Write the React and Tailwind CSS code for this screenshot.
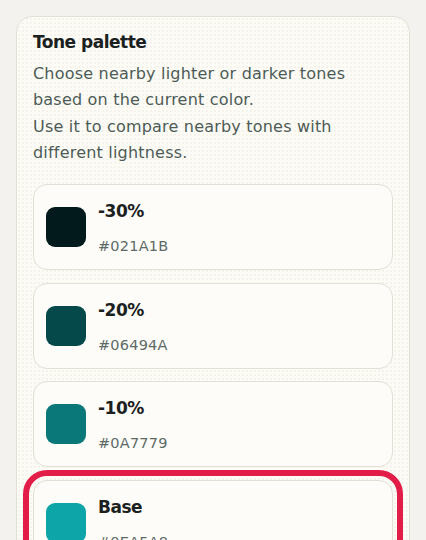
import React from "react";

const tones = [
  { label: "-30%", hex: "#021A1B" },
  { label: "-20%", hex: "#06494A" },
  { label: "-10%", hex: "#0A7779" },
  { label: "Base", hex: "#0EA5A8", selected: true },
  { label: "+10%", hex: "#3EB7B9" },
];

function Item({ label, hex, selected }) {
  return (
    <div
      className={
        "flex items-center gap-3 rounded-[14px] border border-[#e2dfd6] bg-[#fdfcf8] px-3 py-[13px] " +
        (selected ? "outline-[6px] outline-solid outline-offset-4 outline-[#e11d48]" : "")
      }
    >
      <div className="h-10 w-10 shrink-0 rounded-[9px]" style={{ backgroundColor: hex }} />
      <div className="flex flex-col">
        <div className="text-[17px] font-bold leading-[26px] tracking-[-0.5px] text-[#1b2120]">{label}</div>
        <div className="mt-3 text-[14.5px] leading-[20px] tracking-[0.2px] text-[#5d6a66]">{hex}</div>
      </div>
    </div>
  );
}

export default function App() {
  return (
    <div
      className="min-h-[540px] bg-[#f3f2ee] p-4"
      style={{ fontFamily: '"DejaVu Sans", "Noto Sans CJK JP", sans-serif' }}
    >
      <div className="rounded-[16px] border border-[#e2dfd6] bg-[#fcfbf6] bg-[radial-gradient(circle,#f4f2eb_0.7px,transparent_0.8px)] bg-[length:4px_4px] px-4 pt-[12px] pb-6">
        <h2 className="text-[17px] font-bold leading-[26px] tracking-[-0.5px] text-[#1b2120]">Tone palette</h2>
        <p className="mt-[6px] text-[16px] leading-[26.3px] tracking-[0.2px] text-[#4d5b57]">
          Choose nearby lighter or darker tones
          <br />
          based on the current color.
          <br />
          Use it to compare nearby tones with
          <br />
          different lightness.
        </p>
        <div className="mt-[18px] flex flex-col gap-[12.5px]">
          {tones.map((t) => (
            <Item key={t.label} {...t} />
          ))}
        </div>
      </div>
    </div>
  );
}
